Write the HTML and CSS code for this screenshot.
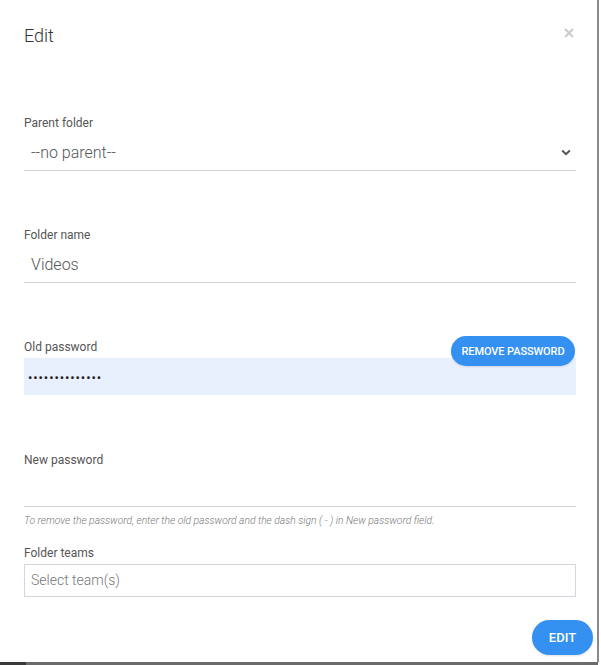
FILE: index.html
```html
<!DOCTYPE html>
<html lang="en">
<head>
<meta charset="utf-8">
<title>Edit</title>
<link rel="stylesheet" href="styles.css">
</head>
<body>
<div class="page">
  <div class="modal">
    <div class="modal-header">
      <h1 class="modal-title">Edit</h1>
      <button class="close" aria-label="Close">
        <svg width="10" height="10" viewBox="0 0 10 10"><path d="M1 1L9 9M9 1L1 9" stroke="#c9c9c9" stroke-width="1.8" fill="none"/></svg>
      </button>
    </div>
    <form class="form">
      <div class="field f-parent">
        <label class="label">Parent folder</label>
        <div class="select">
          <span class="value">--no parent--</span>
          <svg class="chev" width="10" height="7" viewBox="0 0 10 7"><path d="M1.2 1.5L5 5.2L8.8 1.5" stroke="#555" stroke-width="2" fill="none"/></svg>
        </div>
      </div>
      <div class="field f-name">
        <label class="label">Folder name</label>
        <div class="input"><span class="value">Videos</span></div>
      </div>
      <div class="field f-old">
        <label class="label">Old password</label>
        <button type="button" class="btn btn-remove">Remove password</button>
        <div class="input filled"><span class="dots">••••••••••••••</span></div>
      </div>
      <div class="field f-new">
        <label class="label">New password</label>
        <div class="input"></div>
        <p class="help">To remove the password, enter the old password and the dash sign ( - ) in New password field.</p>
      </div>
      <div class="field f-teams">
        <label class="label">Folder teams</label>
        <div class="teams">Select team(s)</div>
      </div>
      <div class="actions">
        <button type="button" class="btn btn-edit">Edit</button>
      </div>
    </form>
  </div>
  <div class="strip"></div>
</div>
</body>
</html>
```
FILE: styles.css
```css
* { box-sizing: border-box; }
html, body { margin: 0; padding: 0; background: #fff; }
body { font-family: Roboto, "Noto Sans", Arial, sans-serif; color: #444; }

.page { width: 601px; height: 665px; display: flex; flex-direction: column; }
.modal {
  width: 599px;
  height: 662px;
  background: #fff;
  border-right: 2px solid #8a8a8a;
  position: relative;
}
.strip { height: 3px; width: 598px; background: linear-gradient(to right, #3a3a3a 0, #3a3a3a 26px, #6b6b6b 26px); }

.modal-header {
  display: flex;
  justify-content: space-between;
  align-items: flex-start;
  padding: 25px 23px 0 24px;
}
.modal-title {
  margin: 0;
  font-size: 18px;
  line-height: 22px;
  font-weight: 300;
  color: #333;
}
.close {
  border: 0; background: none; padding: 0;
  margin-top: 3px;
  width: 10px; height: 10px;
  display: block;
}
.close svg { display: block; }

.form { padding: 0 21px 0 24px; margin: 0; }
.field { position: relative; }
.label {
  display: block;
  font-size: 12px;
  line-height: 14px;
  color: #555;
  margin-bottom: 4px;
}
.f-parent { margin-top: 69px; }
.f-name { margin-top: 57px; }
.f-old { margin-top: 57px; }
.f-new { margin-top: 58px; }
.f-new .label { margin-bottom: 3px; }
.f-teams { margin-top: 18px; }

.select, .input {
  height: 37px;
  border-bottom: 1px solid #cfcfcf;
  display: flex;
  align-items: center;
  padding: 0 7px;
}
.select { justify-content: space-between; padding-right: 5px; }
.value {
  font-size: 16px;
  line-height: 36px;
  font-weight: 300;
  color: #555;
  margin-top: 2px;
}
.chev { display: block; margin-top: 1px; }

.input.filled {
  background: #e8f0fe;
  border-bottom: 0;
  height: 37px;
  padding-left: 4px;
}
.dots {
  font-size: 13px;
  letter-spacing: 0.9px;
  color: #222;
  line-height: 37px;
  margin-top: 1px;
}

.help {
  margin: 7px 0 0;
  font-size: 10.3px;
  line-height: 14px;
  font-style: italic;
  font-weight: 300;
  color: #777;
}

.teams {
  height: 33px;
  border: 1px solid #d3d6dc;
  padding: 0 6px;
  font-size: 14px;
  line-height: 31px;
  font-weight: 300;
  color: #777;
}

.btn {
  border: 0;
  background: #3591f1;
  color: #fff;
  font-family: Roboto, "Noto Sans", Arial, sans-serif;
  font-weight: 500;
  text-transform: uppercase;
  cursor: pointer;
  box-shadow: 0 1px 2px rgba(0,0,0,0.12);
}
.btn-remove {
  position: absolute;
  right: 1px;
  top: -4px;
  width: 124px;
  height: 30px;
  border-radius: 15px;
  font-size: 11px;
  padding: 0;
  letter-spacing: -0.1px;
}
.actions {
  display: flex;
  justify-content: flex-end;
  margin-top: 23px;
  margin-right: -17px;
}
.btn-edit {
  width: 61px;
  height: 35px;
  border-radius: 18px;
  font-size: 13px;
  padding: 0;
}
```
